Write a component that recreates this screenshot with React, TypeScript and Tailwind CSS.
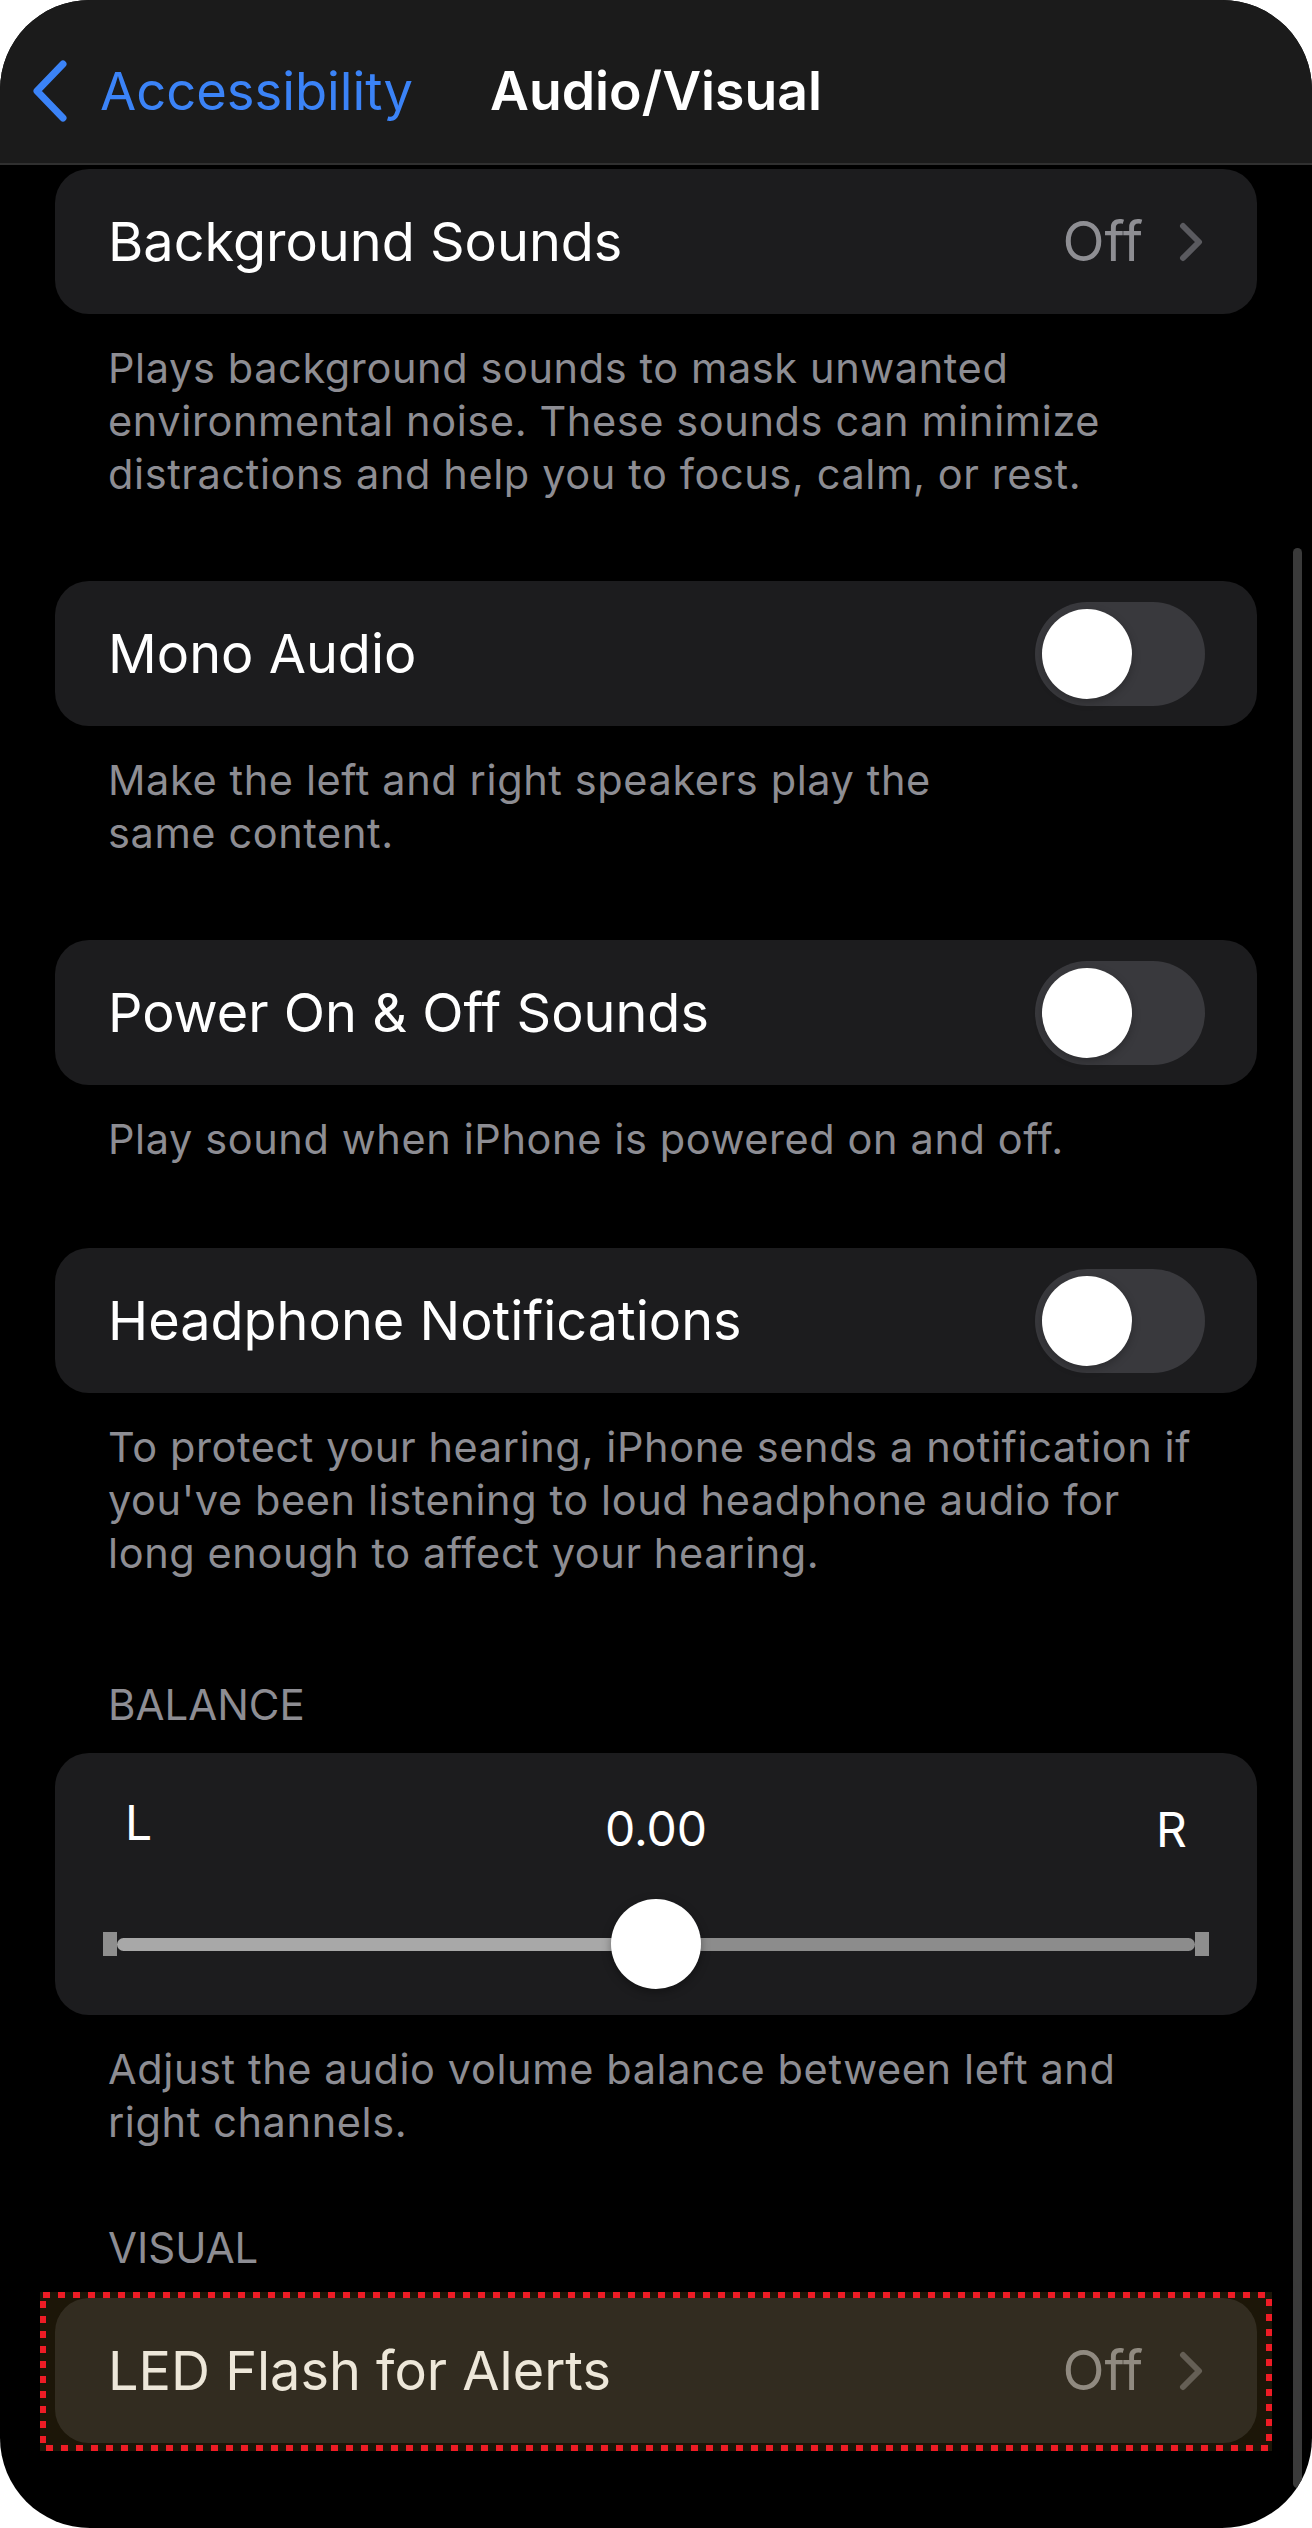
import React from "react";

function Chevron({ className }: { className: string }) {
  return (
    <svg width="24" height="40" viewBox="0 0 24 40" className={className} fill="none">
      <path d="M4 4 L20 20 L4 36" stroke="currentColor" strokeWidth="6" strokeLinecap="round" strokeLinejoin="round" />
    </svg>
  );
}

function Toggle() {
  return (
    <div className="w-[170px] h-[104px] rounded-full bg-[#39393d] flex items-center pl-[7px] shrink-0">
      <div className="w-[90px] h-[90px] rounded-full bg-white shadow-[0_3px_8px_rgba(0,0,0,0.25)]" />
    </div>
  );
}

function ToggleRow({ label }: { label: string }) {
  return (
    <div className="h-[145px] bg-[#1c1c1e] rounded-[34px] flex items-center justify-between pl-[53px] pr-[52px]">
      <span className="text-[54px] text-white">{label}</span>
      <Toggle />
    </div>
  );
}

function LinkRow({ label, value }: { label: string; value: string }) {
  return (
    <div className="h-[145px] bg-[#1c1c1e] rounded-[34px] flex items-center justify-between pl-[53px] pr-[54px]">
      <span className="text-[54px] text-white">{label}</span>
      <div className="flex items-center">
        <span className="text-[55px] text-[#8e8e93]">{value}</span>
        <Chevron className="ml-[36px] text-[#5a5a5f]" />
      </div>
    </div>
  );
}

function Footer({ lines }: { lines: string[] }) {
  return (
    <div className="mt-[28px] px-[53px] text-[41.5px] tracking-[0.6px] leading-[53px] text-[#8d8d93] whitespace-nowrap">
      {lines.map((l) => (
        <div key={l}>{l}</div>
      ))}
    </div>
  );
}

function Header({ text, className }: { text: string; className: string }) {
  return <div className={`px-[53px] text-[42px] leading-[53px] text-[#8d8d93] ${className}`}>{text}</div>;
}

function BalanceCard() {
  return (
    <div className="mt-[22px] h-[262px] bg-[#1c1c1e] rounded-[34px] flex flex-col pt-[41px]">
      <div className="grid grid-cols-3 items-start px-[70px] text-[48px] leading-[58px] text-white">
        <span className="justify-self-start">L</span>
        <span className="justify-self-center mt-[6px]">0.00</span>
        <span className="justify-self-end mt-[7px]">R</span>
      </div>
      <div className="relative mt-[40px] mx-[48px] h-[90px] flex items-center">
        <div className="w-[14px] h-[24px] bg-[#8e8e8e] shrink-0" />
        <div className="flex-1 h-[13px] bg-[#a8a8a8] rounded-l-full" />
        <div className="flex-1 h-[13px] bg-[#8c8c8c] rounded-r-full" />
        <div className="w-[14px] h-[24px] bg-[#8e8e8e] shrink-0" />
        <div className="absolute left-1/2 top-0 -translate-x-1/2 w-[90px] h-[90px] rounded-full bg-white shadow-[0_3px_10px_rgba(0,0,0,0.35)]" />
      </div>
    </div>
  );
}

export default function App() {
  return (
    <div className="w-[1312px] h-[2528px] bg-white font-['Inter','Noto_Sans',sans-serif]">
      <div className="relative h-full bg-black rounded-[90px] overflow-hidden flex flex-col">
        {/* Nav bar */}
        <div className="h-[165px] shrink-0 bg-[#1b1b1b] border-b-2 border-[#303030] pt-[19px] grid grid-cols-[1fr_auto_1fr] items-center">
          <div className="flex items-center pl-[32px]">
            <svg width="36" height="62" viewBox="0 0 36 62" fill="none" className="text-[#3b83f7]">
              <path d="M31 4 L5 31 L31 58" stroke="currentColor" strokeWidth="7" strokeLinecap="round" strokeLinejoin="round" />
            </svg>
            <span className="ml-[32px] text-[52.5px] text-[#3b83f7]">Accessibility</span>
          </div>
          <span className="text-[53.5px] font-semibold text-white">Audio/Visual</span>
          <div />
        </div>

        {/* Content */}
        <div className="px-[55px] pt-[4px] flex flex-col">
          <LinkRow label="Background Sounds" value="Off" />
          <Footer
            lines={[
              "Plays background sounds to mask unwanted",
              "environmental noise. These sounds can minimize",
              "distractions and help you to focus, calm, or rest.",
            ]}
          />

          <div className="mt-[80px]">
            <ToggleRow label="Mono Audio" />
          </div>
          <Footer lines={["Make the left and right speakers play the", "same content."]} />

          <div className="mt-[80px]">
            <ToggleRow label="Power On & Off Sounds" />
          </div>
          <Footer lines={["Play sound when iPhone is powered on and off."]} />

          <div className="mt-[82px]">
            <ToggleRow label="Headphone Notifications" />
          </div>
          <Footer
            lines={[
              "To protect your hearing, iPhone sends a notification if",
              "you've been listening to loud headphone audio for",
              "long enough to affect your hearing.",
            ]}
          />

          <Header text="BALANCE" className="mt-[98px]" />
          <BalanceCard />
          <Footer lines={["Adjust the audio volume balance between left and", "right channels."]} />

          <Header text="VISUAL" className="mt-[72px]" />
          <div className="relative mt-[24px]">
            <LinkRow label="LED Flash for Alerts" value="Off" />
            <div className="absolute -left-[15px] -right-[15px] -top-[6px] -bottom-[8px] bg-[rgba(155,122,44,0.18)] pointer-events-none">
              <svg width="1232" height="159" viewBox="0 0 1232 159" fill="none" className="absolute inset-0">
                <rect x="3" y="3" width="1226" height="153" stroke="#ee1c25" strokeWidth="6" strokeDasharray="7 8" />
              </svg>
            </div>
          </div>
        </div>

        {/* Scroll indicator */}
        <div className="absolute right-[10px] top-[548px] w-[9px] h-[1940px] rounded-full bg-[#3a3a3a]" />
      </div>
    </div>
  );
}
